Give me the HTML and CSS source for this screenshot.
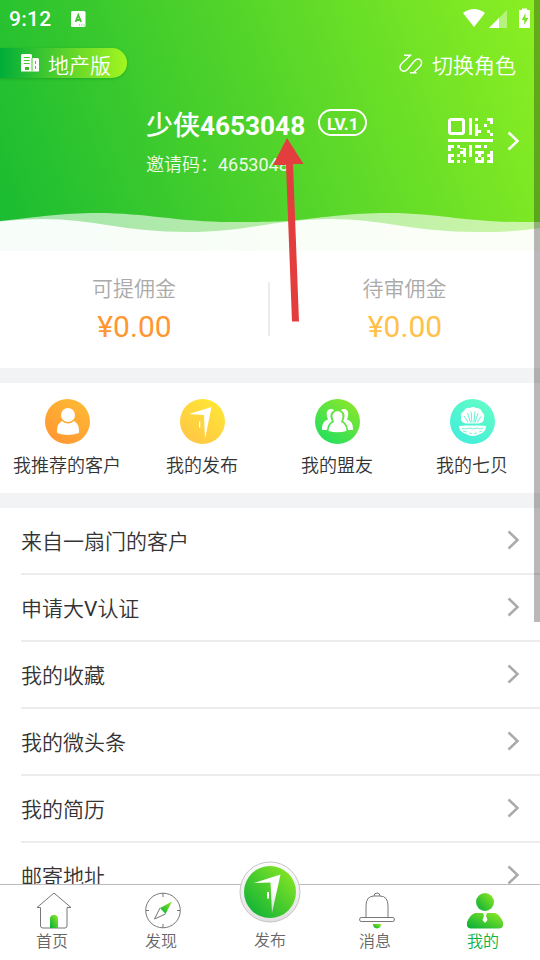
FILE: index.html
```html
<!DOCTYPE html>
<html lang="zh-CN">
<head>
<meta charset="utf-8">
<title>我的</title>
<link rel="stylesheet" href="styles.css">
</head>
<body>
<div class="screen">
  <header class="hero">
    <div class="status">
      <span class="time">9:12</span>
      <svg class="keyboard" width="15" height="16" viewBox="0 0 15 16"><rect width="14.5" height="16" rx="1.5" fill="#fff"/><path d="M4.500 11 7.300 4 10.100 11M5.500 9H9" fill="none" stroke="#40c92e" stroke-width="1.800"/><path d="M8 14h1M10.300 14h1M12.500 14h1" stroke="#40c92e"/></svg>
      <svg class="signals" width="68" height="22" viewBox="0 0 68 22"><path d="M0 5Q11-3 22 5L11 19Z" fill="#fff"/><path d="M26 20 44 2V20Z" fill="#fff" opacity=".4"/><path d="M26 20 36 10V20Z" fill="#fff"/><path d="M56 2h3V.5h5V2h3v18H56Z" fill="#fff"/><path d="M62.500 5 58.800 12h2.500v5l4-7h-2.800Z" fill="#78e522"/></svg>
    </div>
    <div class="switches">
      <div class="edition">
        <svg width="19" height="18" viewBox="0 0 19 18"><path d="M0 1.500Q0 0 1.500 0h8Q11 0 11 1.500V4h5.500Q18 4 18 5.500V17.500H0Z" fill="#fff"/><path d="M2.700 3.500h6M2.700 6.500h6M2.700 9.500h6M11 4v13M14.500 7v3M14.500 12v3" stroke="#45c923" fill="none"/><path d="M4 16v-3h4v3" fill="#38bd28"/></svg>
        <span>地产版</span>
      </div>
      <div class="role">
        <svg width="24" height="20" viewBox="0 0 24 20" fill="none" stroke="#fff" stroke-width="1.400"><path d="M5 1.200H11.500L2.700 9.500Q-.5 13 2.300 16.200Q5.300 18.500 8.500 15.500L15 7.500Q18.500 3.500 21.500 6Q24 9 21 12.500L14.500 18.700M11 18.700H17.500"/></svg>
        <span>切换角色</span>
      </div>
    </div>
    <div class="profile">
      <div class="person">
        <div class="name-row"><span class="name">少侠<b>4653048</b></span><span class="level">LV.1</span></div>
        <div class="invite">邀请码：<span class="latin">4653048</span></div>
      </div>
      <svg class="qr" width="45" height="45" viewBox="0 0 45 45" fill="#fff"><path fill-rule="evenodd" d="M2 0H15L17 2V15L15 17H2L0 15V2ZM3 3V14H14V3Z"/><path d="M21 0h3v17h-3zM27 0h3v3h-3zM27 6h3v3h-3zM27 9h3v3h3v3h-3v3h-3zM39 0h6v6h-3v-3h-3zM36 6h3v3h-3zM39 12h3v3h3v3h-3v-3h-3zM0 21h45v3H0zM21 27h3v12h-3zM0 27h6v3h-3v3H0zM9 27h3v3H9zM12 30h6v9h-3v-3h-3v-3h3v-2h-3zM0 36h6v3H3v3h3v3H0zM9 36h3v3H9zM9 42h3v3H9zM15 42h3v3h-3zM27 27h6v3h-6zM36 27h3v3h-3zM30 33h6v3h-3v3h-3v-3h-3v-3zM42 33h3v12h-6v-3h3v-3h-3v-3h3zM27 39h3v3h6v3h-9zM33 39h3v3h-3z"/></svg>
      <svg class="chevron light" width="13" height="20" viewBox="0 0 13 20"><path d="m1.500 1.500 9 8.500-9 8.500"/></svg>
    </div>
    <svg class="waves" width="540" height="38" viewBox="0 0 540 38"><path d="M0 8C40 4 61 0 98 0C145 0 180 9 230 9C260 9 265 9 289 8C329 4 350 0 387 0C434 0 469 9 519 9H540V38H0Z" fill="#fff" fill-opacity=".6"/><path d="M0 8.500C15 7 28 6 43 6C92 6 125 19 188 19C247 19 275 6 332 6C381 6 414 19 477 19C501 19 521 18 540 15V38H0Z" fill="#fff" fill-opacity=".91"/></svg>
  </header>

  <section class="commission">
    <div class="amount"><span class="caption">可提佣金</span><span class="money">¥0.00</span></div>
    <div class="amount pending"><span class="caption">待审佣金</span><span class="money">¥0.00</span></div>
  </section>

  <section class="shortcuts">
    <div class="shortcut">
      <div class="disc orange"><svg width="45" height="45" viewBox="0 0 45 45" fill="#fff"><circle cx="23" cy="16" r="7"/><path d="M17 22Q23 27 29 22Q34 25 34 31V34Q23 38 12 34V31Q12 25 17 22Z"/></svg></div>
      <span>我推荐的客户</span>
    </div>
    <div class="shortcut">
      <div class="disc yellow"><svg width="45" height="45" viewBox="0 0 45 45" fill="#fff"><path d="M9 15 31.500 8 25 40 24 16Z"/><path d="M19 22.500h1.300v6H19z"/></svg></div>
      <span>我的发布</span>
    </div>
    <div class="shortcut">
      <div class="disc green"><svg width="45" height="45" viewBox="0 0 45 45" fill="#fff"><path id="side" d="M12.500 19C9 9 18 9 19 11.500C15 13 14.500 18 17 22Q12.500 25 12 31H7C7 24 9 22 13 20.500Z"/><use href="#side" transform="translate(45 0) scale(-1 1)"/><path d="M17.500 17C17.500 10.500 27.500 10.500 27.500 17Q27.500 20 26 23Q31 25 31.500 32Q22.500 34.500 13.500 32Q14 25 19 23Q17.500 20 17.500 17Z"/></svg></div>
      <span>我的盟友</span>
    </div>
    <div class="shortcut">
      <div class="disc aqua"><svg width="45" height="45" viewBox="0 0 45 45"><path d="M15.500 24.500Q10 23 11 18Q10 14 14 12Q16 8 20 9Q23 7 26 9Q31 9 32 13Q35 15 34 19Q34 24 28.500 24.500ZM9 27 15 26.500H29L36 27Q36 33 30 35Q23 39 16 35Q9 33 9 27Z" fill="#fff"/><path d="m18 23-4-6m6.500 6.500-3-9.500m4.500 9.500-1-11m3 11 1-11m0 11 3-9.500m-1 9.500 4-6" stroke="#5aeccd" stroke-width=".9" fill="none"/><path d="M12 29.500 16 30l3-1 4 1 4-1 3 1 3-1M13 32l4 1m2 1 3 .5m2 0 3-.7m2-.8 3-1" stroke="#5aeccd" stroke-width=".8" fill="none"/></svg></div>
      <span>我的七贝</span>
    </div>
  </section>

  <ul class="menu">
    <li><span>来自一扇门的客户</span><svg class="chevron" width="13" height="20" viewBox="0 0 13 20"><path d="m1.500 1.500 9 8.500-9 8.500"/></svg></li>
    <li><span>申请大<span class="latin">V</span>认证</span><svg class="chevron" width="13" height="20" viewBox="0 0 13 20"><path d="m1.500 1.500 9 8.500-9 8.500"/></svg></li>
    <li><span>我的收藏</span><svg class="chevron" width="13" height="20" viewBox="0 0 13 20"><path d="m1.500 1.500 9 8.500-9 8.500"/></svg></li>
    <li><span>我的微头条</span><svg class="chevron" width="13" height="20" viewBox="0 0 13 20"><path d="m1.500 1.500 9 8.500-9 8.500"/></svg></li>
    <li><span>我的简历</span><svg class="chevron" width="13" height="20" viewBox="0 0 13 20"><path d="m1.500 1.500 9 8.500-9 8.500"/></svg></li>
    <li><span>邮寄地址</span><svg class="chevron" width="13" height="20" viewBox="0 0 13 20"><path d="m1.500 1.500 9 8.500-9 8.500"/></svg></li>
  </ul>

  <nav class="tabs">
    <div class="tab">
      <svg width="36" height="37" viewBox="0 0 36 37" fill="none" stroke="#777"><defs><linearGradient id="g" x1="0" y1="1" x2="1" y2="0"><stop stop-color="#02ad39"/><stop offset="1" stop-color="#92eb22"/></linearGradient></defs><path d="M4.500 15.500H1L18 1l17 14.500h-4V34q0 2-2 2H7q-2.500 0-2.500-2Z"/><path d="M14 36V27q0-4 4-4t4 4v9Z" fill="url(#g)" stroke="none"/></svg>
      <span>首页</span>
    </div>
    <div class="tab">
      <svg width="36" height="37" viewBox="0 0 36 37" fill="none" stroke="#777"><circle cx="18" cy="18.500" r="17.300"/><path d="M18 1v4M18 32v4M1 18.500h3M32 18.500h3M15 16 9.500 27 20.500 22"/><path d="m15 16 12-6.500L20.500 22Z" fill="url(#g)" stroke="none"/></svg>
      <span>发现</span>
    </div>
    <div class="tab publish">
      <svg width="62" height="62" viewBox="0 0 62 62"><defs><linearGradient id="rim" x2="0" y2="1"><stop stop-color="#fff"/><stop offset="1" stop-color="#e2dfe0"/></linearGradient><linearGradient id="door" x2="0" y2="1"><stop offset=".4" stop-color="#fff"/><stop offset="1" stop-color="#cdd8ca"/></linearGradient></defs><circle cx="31" cy="31" r="30" fill="url(#rim)" stroke="#c5c5c5"/><circle cx="31" cy="31" r="26" fill="url(#g)"/><path d="M15 22 41.500 13.500 33 52 31.500 21.500Z" fill="url(#door)"/><path d="M28 31h2v6.500H28z" fill="#fff"/></svg>
      <span>发布</span>
    </div>
    <div class="tab">
      <svg width="36" height="37" viewBox="0 0 36 37" fill="none" stroke="#777"><path d="M15 4q0-3 3-3t3 3M7 25V14Q7 4 15 4h6q8 0 8 10v11"/><rect x=".7" y="25.500" width="34.600" height="4" rx="1.500"/><path d="M14 32h8q0 4-4 4.500-4-.5-4-4.500Z" fill="url(#g)" stroke="none"/></svg>
      <span>消息</span>
    </div>
    <div class="tab active">
      <svg width="36" height="37" viewBox="0 0 36 37"><circle cx="18" cy="10" r="9" fill="url(#g)"/><path d="M8 21H28Q33 23 36 30 37 36 32 36.500H4Q-1 36 0 30 3 23 8 21Z" fill="url(#g)"/><path d="M16 21h4l-1 3 1.500 4L18 31l-2.500-3 1.500-4Z" fill="#fff"/></svg>
      <span>我的</span>
    </div>
  </nav>
  <div class="scrollbar"></div>
  <svg class="arrow" width="32" height="186" viewBox="0 0 32 186"><path d="M15 0 31.500 26H21L27 183.500H20L14 27H1Z" fill="#e33d3d"/></svg>
</div>
</body>
</html>
```
FILE: styles.css
```css
* { box-sizing: border-box; }
body { margin: 0; font-family: Roboto, "Noto Sans CJK SC", sans-serif; font-weight: 350; color: #333; }
svg { display: block; flex: none; }
.latin { font-weight: 400; }
.screen { position: relative; width: 540px; height: 960px; overflow: hidden; background: #fff; display: flex; flex-direction: column; }
.hero { flex: none; height: 251px; display: flex; flex-direction: column; color: #fff; background: linear-gradient(70deg, #18bb32 0%, #55d52a 52%, #8cef22 100%); }
.status { height: 36px; display: flex; align-items: center; padding: 1px 9px 0 9px; }
.time { font-size: 21px; font-weight: 500; line-height: 36px; letter-spacing: .3px; }
.keyboard { margin-left: 19px; }
.signals { margin-left: auto; }
.switches { margin-top: 12px; display: flex; justify-content: space-between; padding-right: 24px; font-size: 21px; line-height: 30px; }
.edition { display: flex; align-items: center; gap: 8px; width: 127px; height: 30px; padding-left: 21px; border-radius: 0 15px 15px 0; background: linear-gradient(90deg, #00ad39, #61d52a 55%, #a3f620); box-shadow: 0 1px 3px rgba(0, 120, 20, .35); }
.edition span, .role span { position: relative; top: 3px; }
.role { display: flex; align-items: center; gap: 9px; }
.role svg { margin-top: 2px; }
.profile { display: flex; height: 90px; padding: 29px 20px 0 146px; }
.person { width: 302px; }
.name-row { display: flex; align-items: center; height: 36px; padding-top: 1px; }
.name { font-size: 27px; font-weight: 500; line-height: 36px; }
.name b { font-size: 26.200px; font-weight: 700; }
.level { width: 49px; height: 27px; margin: -6px 0 0 13px; border: 2px solid #fff; border-radius: 14px; text-align: center; font-size: 17px; line-height: 26px; font-weight: 700; }
.invite { margin-top: 9px; font-size: 18px; line-height: 26px; opacity: .9; }
.qr { margin-top: 11px; }
.chevron { fill: none; stroke: #aaa; stroke-width: 2.500; }
.chevron.light { stroke: #fff; margin: 24px 0 0 14px; }
.waves { margin-top: auto; }
.commission { flex: none; height: 117px; display: flex; }
.amount { width: 271px; padding: 23px 2px 0 0; display: flex; flex-direction: column; align-items: center; position: relative; }
.pending { padding-right: 1px; }
.amount:first-child::after { content: ""; position: absolute; right: 0; top: 31px; width: 2px; height: 54px; background: #ececec; }
.caption { color: #aaa; font-size: 21px; line-height: 31px; }
.money { color: #ff9630; font-size: 30px; font-weight: 400; line-height: 44px; margin-left: 1px; }
.pending .money { color: #ffc147; }
.shortcuts { flex: none; height: 140px; border: solid #f2f3f5; border-width: 15px 0; display: flex; }
.shortcut { width: 135px; padding-top: 16px; display: flex; flex-direction: column; align-items: center; font-size: 18px; line-height: 26px; gap: 9px; white-space: nowrap; }
.shortcut span { margin-right: 1px; }
.disc { width: 45px; height: 45px; border-radius: 50%; }
.orange { background: linear-gradient(35deg, #ff9331, #ffbd35); }
.yellow { background: linear-gradient(35deg, #ffc247, #ffea33); }
.green { background: linear-gradient(35deg, #16df64, #96e725); }
.aqua { background: linear-gradient(35deg, #3eebdc, #66ffc5); }
.menu { margin: 0; padding: 0 0 0 21px; list-style: none; flex: 1; min-height: 0; overflow: hidden; }
.menu li { height: 67px; border-bottom: 2px solid #ececec; display: flex; justify-content: space-between; align-items: center; padding: 0 20px 2px 0; font-size: 21px; }
.tabs { flex: none; height: 76px; border-top: 1px solid #bbb; display: grid; grid-template-columns: 108px 110px 103px 112px 103px; position: relative; background: #fff; }
.tab { display: flex; flex-direction: column; align-items: center; padding-top: 7px; font-size: 16px; line-height: 22px; color: #666; }
.tab span { margin: 2px 4px 0 0; }
.publish svg { margin-top: -31px; }
.publish span { margin: 7px 0 0 1px; }
.tab.active { color: #08b343; }
.active span { margin-right: 3px; }
.scrollbar { position: absolute; right: 0; top: 0; width: 6px; height: 622px; background: rgba(0, 0, 0, .28); }
.arrow { position: absolute; left: 272px; top: 138px; }
```
